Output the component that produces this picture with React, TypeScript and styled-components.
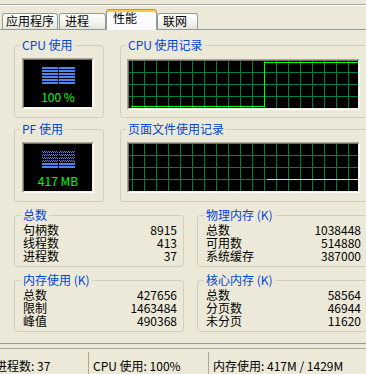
import React from "react";
import styled, { createGlobalStyle } from "styled-components";

const BLUE = "#4A86F0";
const GRID = "#008040";

const GlobalStyle = createGlobalStyle`
  *, *::before, *::after { box-sizing: border-box; }
  html, body { margin: 0; padding: 0; }
  body {
    width: 366px;
    height: 374px;
    overflow: hidden;
    background: #ECE9D8;
    font-family: "Noto Sans CJK SC", "Noto Sans", sans-serif;
    font-size: 12px;
    line-height: 12px;
    color: #000;
  }
`;

const Screen = styled.div`
  width: 366px;
  height: 374px;
  overflow: hidden;
  background: #ECE9D8;
  display: flex;
  flex-direction: column;
`;

const MenuRule = styled.div`
  flex: none;
  margin-top: 4px;
  height: 2px;
  border-top: 1px solid #aca899;
  border-bottom: 1px solid #ffffff;
`;

const TabControl = styled.div`
  flex: none;
  margin-left: -1px;
  width: 384px;
  display: flex;
  flex-direction: column;
`;

const TabStrip = styled.div`
  display: flex;
  align-items: flex-end;
  height: 24px;
  padding: 3px 0 0 3px;
  margin-bottom: -1px;
`;

const Tab = styled.div<{ $w: number; $pl: number; $mr: number; $active?: boolean }>`
  flex: none;
  width: ${(p) => p.$w}px;
  margin-right: ${(p) => p.$mr}px;
  padding-left: ${(p) => p.$pl}px;
  border: 1px solid #919b9c;
  border-bottom: none;
  border-radius: 3px 3px 0 0;
  white-space: nowrap;
  ${(p) =>
    p.$active
      ? `
    position: relative;
    z-index: 1;
    height: 21px;
    padding-top: 2px;
    border-top-color: #e68b2c;
    background: #fcfcfe;
    box-shadow: inset 0 2px 0 #ffc73c;
  `
      : `
    height: 16px;
    margin-bottom: 1px;
    padding-top: 1px;
    background: linear-gradient(to bottom, #ffffff 0%, #f7f7f3 45%, #e6e4da 100%);
  `}
`;

const Panel = styled.div`
  height: 315px;
  border: 1px solid #919b9c;
  background: #ece9d8;
  padding: 9px 14px 0 14px;
  display: flex;
  flex-direction: column;
`;

const TopGrid = styled.div`
  display: grid;
  grid-template-columns: 90px 1fr;
  column-gap: 16px;
  row-gap: 5px;
`;

const BottomGrid = styled.div`
  display: grid;
  grid-template-columns: 170px 1fr;
  column-gap: 13px;
  row-gap: 7px;
  margin-top: 7px;
`;

const Group = styled.fieldset`
  margin: 0;
  padding: 0;
  min-width: 0;
  border: 1px solid #d0d0bf;
  border-radius: 3px;
`;

const Legend = styled.legend<{ $indent: number }>`
  margin-left: ${(p) => p.$indent}px;
  padding: 0 2px;
  color: #0046d5;
  font-size: 12px;
  line-height: 12px;
  white-space: nowrap;
`;

const DisplayArea = styled.div<{ $pt: number; $pb: number; $pl: number }>`
  padding: ${(p) => p.$pt}px 0 ${(p) => p.$pb}px ${(p) => p.$pl}px;
  display: flex;
`;

const Sunken = styled.div<{ $w: number }>`
  width: ${(p) => p.$w}px;
  height: 51px;
  border: 1px solid;
  border-color: #aca899 #ffffff #ffffff #aca899;
`;

const Screenface = styled.div`
  width: 100%;
  height: 100%;
  background: #000;
  border: 1px solid;
  border-color: #716f64 #f1efe2 #f1efe2 #716f64;
  display: flex;
  flex-direction: column;
  align-items: center;
  overflow: hidden;
`;

const MeterSlot = styled.div`
  margin-top: 7px;
  height: 17px;
  display: flex;
`;

const MeterText = styled.div`
  margin-top: 7px;
  color: #00ff00;
  font-size: 12px;
  line-height: 12px;
  white-space: pre;
`;

const StatsBody = styled.div`
  padding: 2px 6px 4px 8px;
  display: flex;
  flex-direction: column;
`;

const StatRow = styled.div`
  height: 13px;
  line-height: 13px;
  display: flex;
  justify-content: space-between;
  white-space: nowrap;
`;

const StatValue = styled.span`
  font-variant-numeric: tabular-nums;
`;

const StatusBar = styled.div`
  flex: none;
  margin-top: 4px;
  margin-left: -10px;
  height: 26px;
  border-top: 1px solid #aca899;
  display: flex;
`;

const Pane = styled.div<{ $w?: number; $sep?: boolean }>`
  flex: ${(p) => (p.$w ? "none" : "1")};
  width: ${(p) => (p.$w ? `${p.$w}px` : "auto")};
  margin-top: 3px;
  padding-top: 8px;
  padding-left: ${(p) => (p.$sep ? 4 : 5)}px;
  border-left: ${(p) => (p.$sep ? "1px solid #aca899" : "none")};
  white-space: pre;
  line-height: 12px;
`;

function Meter({ lit }: { lit: number }) {
  const rows = [0, 1, 2, 3, 4, 5];
  return (
    <svg width={33} height={17} shapeRendering="crispEdges">
      <defs>
        <pattern id="meterDots" width="2" height="2" patternUnits="userSpaceOnUse">
          <rect x="0" y="0" width="1" height="1" fill={BLUE} />
          <rect x="1" y="1" width="1" height="1" fill={BLUE} />
        </pattern>
      </defs>
      {rows.map((i) => {
        const on = i >= rows.length - lit;
        const fill = on ? BLUE : "url(#meterDots)";
        return (
          <g key={i}>
            <rect x={0} y={i * 3} width={16} height={2} fill={fill} />
            <rect x={17} y={i * 3} width={16} height={2} fill={fill} />
          </g>
        );
      })}
    </svg>
  );
}

const GW = 229;
const GH = 47;

function Graph({ path, color }: { path: string; color: string }) {
  const xs: number[] = [];
  for (let x = 3; x < GW; x += 12) xs.push(x);
  const ys = [11, 23, 35];
  return (
    <svg width={GW} height={GH} shapeRendering="crispEdges" style={{ display: "block" }}>
      {xs.map((x) => (
        <line key={`v${x}`} x1={x + 0.5} y1={0} x2={x + 0.5} y2={GH} stroke={GRID} strokeWidth={1} />
      ))}
      {ys.map((y) => (
        <line key={`h${y}`} x1={0} y1={y + 0.5} x2={GW} y2={y + 0.5} stroke={GRID} strokeWidth={1} />
      ))}
      <path d={path} fill="none" stroke={color} strokeWidth={1} />
    </svg>
  );
}

function MeterGroup({ title, lit, text }: { title: string; lit: number; text: string }) {
  return (
    <Group>
      <Legend $indent={5}>{title}</Legend>
      <DisplayArea $pt={7} $pb={8} $pl={7}>
        <Sunken $w={72}>
          <Screenface>
            <MeterSlot>
              <Meter lit={lit} />
            </MeterSlot>
            <MeterText>{text}</MeterText>
          </Screenface>
        </Sunken>
      </DisplayArea>
    </Group>
  );
}

function GraphGroup({
  title,
  path,
  color,
  pt,
  pb,
}: {
  title: string;
  path: string;
  color: string;
  pt: number;
  pb: number;
}) {
  return (
    <Group>
      <Legend $indent={5}>{title}</Legend>
      <DisplayArea $pt={pt} $pb={pb} $pl={6}>
        <Sunken $w={233}>
          <Screenface>
            <Graph path={path} color={color} />
          </Screenface>
        </Sunken>
      </DisplayArea>
    </Group>
  );
}

function StatsGroup({ title, rows }: { title: string; rows: [string, string][] }) {
  return (
    <Group>
      <Legend $indent={6}>{title}</Legend>
      <StatsBody>
        {rows.map(([k, v]) => (
          <StatRow key={k}>
            <span>{k}</span>
            <StatValue>{v}</StatValue>
          </StatRow>
        ))}
      </StatsBody>
    </Group>
  );
}

export default function App() {
  return (
    <>
      <GlobalStyle />
      <Screen>
        <MenuRule />
        <TabControl>
          <TabStrip>
            <Tab $w={56} $pl={3} $mr={1}>应用程序</Tab>
            <Tab $w={47} $pl={5} $mr={0}>进程</Tab>
            <Tab $w={51} $pl={6} $mr={0} $active>性能</Tab>
            <Tab $w={41} $pl={5} $mr={0}>联网</Tab>
          </TabStrip>
          <Panel>
            <TopGrid>
              <MeterGroup title="CPU 使用" lit={6} text="100 %" />
              <GraphGroup
                title="CPU 使用记录"
                color="#00ff00"
                pt={8}
                pb={7}
                path="M2 45.5 H135.5 V1.5 H229"
              />
              <MeterGroup title="PF 使用" lit={2} text="417 MB" />
              <GraphGroup
                title="页面文件使用记录"
                color="#ffff00"
                pt={7}
                pb={8}
                path="M138 35.5 H229"
              />
            </TopGrid>
            <BottomGrid>
              <StatsGroup
                title="总数"
                rows={[
                  ["句柄数", "8915"],
                  ["线程数", "413"],
                  ["进程数", "37"],
                ]}
              />
              <StatsGroup
                title="物理内存 (K)"
                rows={[
                  ["总数", "1038448"],
                  ["可用数", "514880"],
                  ["系统缓存", "387000"],
                ]}
              />
              <StatsGroup
                title="内存使用 (K)"
                rows={[
                  ["总数", "427656"],
                  ["限制", "1463484"],
                  ["峰值", "490368"],
                ]}
              />
              <StatsGroup
                title="核心内存 (K)"
                rows={[
                  ["总数", "58564"],
                  ["分页数", "46944"],
                  ["未分页", "11620"],
                ]}
              />
            </BottomGrid>
          </Panel>
        </TabControl>
        <StatusBar>
          <Pane $w={98}>进程数: 37</Pane>
          <Pane $w={120} $sep>CPU 使用: 100%</Pane>
          <Pane $sep>内存使用: 417M / 1429M</Pane>
        </StatusBar>
      </Screen>
    </>
  );
}
